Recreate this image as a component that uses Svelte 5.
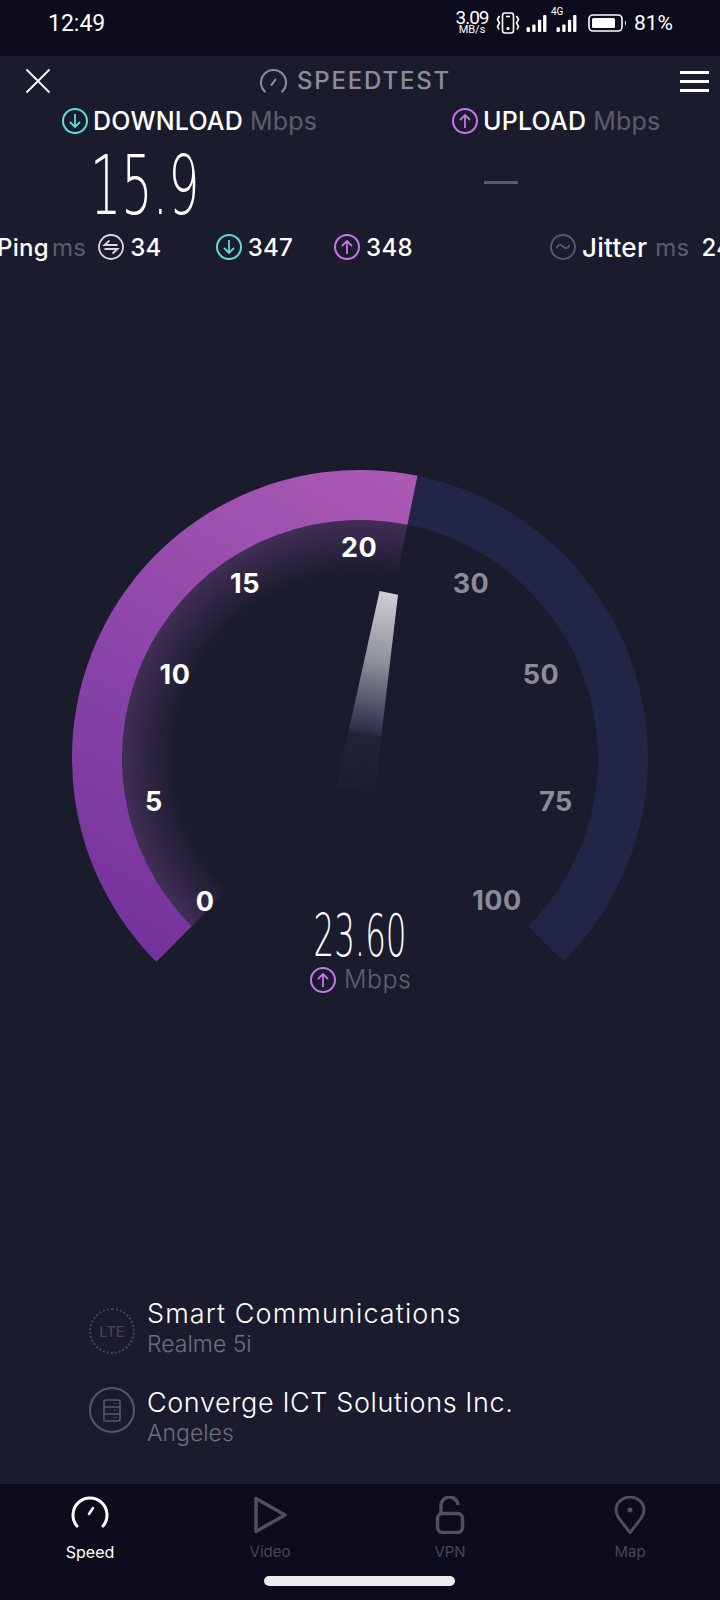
<script lang="ts">
  const cx = 360;
  const cy = 759;

  function polar(r: number, deg: number) {
    const a = ((deg - 90) * Math.PI) / 180;
    return `${(cx + r * Math.cos(a)).toFixed(2)} ${(cy + r * Math.sin(a)).toFixed(2)}`;
  }

  // ring sector, angles in degrees clockwise from 12 o'clock
  function sector(inner: number, outer: number, from: number, to: number) {
    const large = to - from > 180 ? 1 : 0;
    return `M${polar(outer, from)} A${outer} ${outer} 0 ${large} 1 ${polar(outer, to)} L${polar(inner, to)} A${inner} ${inner} 0 ${large} 0 ${polar(inner, from)} Z`;
  }

  const ticks = [
    { label: "0", x: 205, y: 902, on: true },
    { label: "5", x: 154, y: 802, on: true },
    { label: "10", x: 175, y: 675, on: true },
    { label: "15", x: 245, y: 584, on: true },
    { label: "20", x: 359, y: 548, on: true },
    { label: "30", x: 471, y: 584, on: false },
    { label: "50", x: 541, y: 675, on: false },
    { label: "75", x: 556, y: 802, on: false },
    { label: "100", x: 497, y: 901, on: false },
  ];
</script>

{#snippet arrow(up: boolean, color: string)}
  <svg class="ring-icon" viewBox="0 0 26 26" fill="none" stroke={color} stroke-width="2">
    <circle cx="13" cy="13" r="12" />
    {#if up}
      <path d="M13 20V7M8 12l5-5 5 5" stroke-width="1.8" />
    {:else}
      <path d="M13 6v13M8 14l5 5 5-5" stroke-width="1.8" />
    {/if}
  </svg>
{/snippet}

<div class="app">
  <div class="status">
    <span class="clock">12:49</span>
    <div class="status-right">
      <div class="rate"><span>3.09</span><small>MB/s</small></div>
      <svg class="vibrate" viewBox="0 0 24 22" fill="none" stroke="#fff" stroke-width="1.6">
        <rect x="6.500" y="1" width="11" height="20" rx="2.500" />
        <path d="M10 4.500h4" />
        <circle cx="12" cy="16.500" r="0.800" fill="#fff" />
        <path d="M3.500 4L1.500 7.500l2 3.500-2 3.500 1.500 3M20.500 4l2 3.500-2 3.500 2 3.500-1.500 3" />
      </svg>
      <svg class="signal" viewBox="0 0 21 18" fill="#fff">
        <rect x="0" y="13" width="3.500" height="5" rx="1" />
        <rect x="6" y="10" width="3.500" height="8" rx="1" />
        <rect x="12" y="5" width="3.500" height="13" rx="1" />
        <rect x="17.500" y="0" width="3.500" height="18" rx="1" />
      </svg>
      <div class="signal-4g">
        <span>4G</span>
        <svg class="signal" viewBox="0 0 21 18" fill="#fff">
          <rect x="0" y="13" width="3.500" height="5" rx="1" />
          <rect x="6" y="10" width="3.500" height="8" rx="1" />
          <rect x="12" y="5" width="3.500" height="13" rx="1" />
          <rect x="17.500" y="0" width="3.500" height="18" rx="1" />
        </svg>
      </div>
      <svg class="battery" viewBox="0 0 39 18" fill="none">
        <rect x="1" y="1" width="33" height="16" rx="4" stroke="#fff" stroke-width="1.600" />
        <rect x="4" y="4" width="23" height="10" rx="1.500" fill="#fff" />
        <path d="M37 6.500c1.300.6 1.300 4.400 0 5z" fill="#fff" />
      </svg>
      <span class="pct">81%</span>
    </div>
  </div>

  <main class="main">
    <div class="topbar">
      <svg class="close" viewBox="0 0 26 26" stroke="#fff" stroke-width="1.800">
        <path d="M1.500 1.500l23 23M24.500 1.500l-23 23" />
      </svg>
      <div class="brand">
        <svg viewBox="0 0 28 28" fill="none" stroke="#8b8d99" stroke-width="2.200" stroke-linecap="round">
          <path d="M5 24.500A13 13 0 1 1 23 24.500" />
          <path d="M12 17.500l4-5.500" />
        </svg>
        <span>SPEEDTEST</span>
      </div>
      <div class="menu"><i></i><i></i><i></i></div>
    </div>

    <div class="results">
      <div class="result">
        <div class="result-head">
          {@render arrow(false, "#5fdcd8")}
          <b>DOWNLOAD</b><span>Mbps</span>
        </div>
        <div class="value"><span>15.9</span></div>
      </div>
      <div class="result upload">
        <div class="result-head">
          {@render arrow(true, "#c377e8")}
          <b>UPLOAD</b><span>Mbps</span>
        </div>
        <div class="value"><i class="dash"></i></div>
      </div>
    </div>

    <div class="stats">
      <div class="stat ping"><b>Ping</b><span>ms</span></div>
      <div class="stat ping-val">
        <svg class="ring-icon" viewBox="0 0 26 26" fill="none" stroke="#d8d8dc" stroke-width="1.800">
          <circle cx="13" cy="13" r="12" />
          <path d="M19.500 11H6.500l5-4.500M6.500 15h13l-5 4.500" />
        </svg>
        <b>34</b>
      </div>
      <div class="stat dl-val">{@render arrow(false, "#5fdcd8")}<b>347</b></div>
      <div class="stat ul-val">{@render arrow(true, "#c377e8")}<b>348</b></div>
      <div class="stat jitter">
        <svg class="ring-icon" viewBox="0 0 26 26" fill="none" stroke="#5a5c6c" stroke-width="1.800">
          <circle cx="13" cy="13" r="12" />
          <path d="M6.500 14c2-4 4-4 6.500-1.500s4.500 2.500 6.500-1.500" />
        </svg>
        <b>Jitter</b><span>ms</span><b class="jitter-val">24</b>
      </div>
    </div>

    <svg class="gauge" viewBox="0 440 720 570">
      <defs>
        <linearGradient id="fill" gradientUnits="userSpaceOnUse" x1="156" y1="961" x2="418" y2="476">
          <stop offset="0" stop-color="#74339b" />
          <stop offset="0.45" stop-color="#8a44a9" />
          <stop offset="1" stop-color="#ac5ab4" />
        </linearGradient>
        <radialGradient id="glow" gradientUnits="userSpaceOnUse" cx={cx} cy={cy} r="238">
          <stop offset="0.78" stop-color="#a85abe" stop-opacity="0" />
          <stop offset="1" stop-color="#a85abe" stop-opacity="0.28" />
        </radialGradient>
        <linearGradient id="needle" gradientUnits="userSpaceOnUse" x1="389" y1="594" x2="355" y2="791">
          <stop offset="0" stop-color="#cfcfd3" />
          <stop offset="0.35" stop-color="#8d8f9a" />
          <stop offset="0.7" stop-color="#2c2e4c" />
          <stop offset="0.72" stop-color="#222438" />
          <stop offset="1" stop-color="#1f2134" stop-opacity="0.4" />
        </linearGradient>
      </defs>
      <path d={sector(238, 288, 11.5, 135)} fill="#222545" />
      <path d={sector(238, 288, -135, 11.5)} fill="url(#fill)" />
      <path d={sector(186, 238, -135, 11.5)} fill="url(#glow)" />
      <polygon points="379.600,592 398,595.700 374.600,794 336,789" fill="url(#needle)" />
      {#each ticks as t (t.label)}
        <text class="tick" class:on={t.on} x={t.x} y={t.y + 9.500} text-anchor="middle">{t.label}</text>
      {/each}
      <text class="speed" transform="translate(360 956.500) scale(0.56 1)" text-anchor="middle">23.60</text>
      <g fill="none" stroke="#c377e8" stroke-width="2" transform="translate(310 968)">
        <circle cx="13" cy="13" r="12" />
        <path d="M13 20V7M8 12l5-5 5 5" stroke-width="1.800" />
      </g>
      <text class="unit" x="344" y="989">Mbps</text>
    </svg>

    <div class="info">
      <div class="info-row first">
        <div class="badge dim"><span>LTE</span></div>
        <div class="info-text"><b>Smart Communications</b><span>Realme 5i</span></div>
      </div>
      <div class="info-row second">
        <div class="badge">
          <svg viewBox="0 0 18 23" fill="none" stroke="#55566a" stroke-width="1.600">
            <rect x="1" y="1" width="16" height="21" rx="2" />
            <path d="M1 8h16M1 15h16" />
            <path d="M11 4.500h3.500M11 11.500h3.500M11 18.500h3.500" stroke-width="1.200" stroke-dasharray="1 1" />
          </svg>
        </div>
        <div class="info-text"><b>Converge ICT Solutions Inc.</b><span>Angeles</span></div>
      </div>
    </div>
  </main>

  <nav class="tabbar">
    <div class="tabs">
      <div class="tab active">
        <svg viewBox="0 0 38 34" fill="none" stroke="#fff" stroke-width="3" stroke-linecap="round">
          <path d="M6 32A17 17 0 1 1 32 32" />
          <path d="M18 20l4-6" stroke-width="2.500" />
        </svg>
        <span>Speed</span>
      </div>
      <div class="tab">
        <svg viewBox="0 0 38 38" fill="none" stroke="#4e505e" stroke-width="3.500" stroke-linejoin="round">
          <path d="M5 2.500L34 19 5 35.500z" />
        </svg>
        <span>Video</span>
      </div>
      <div class="tab">
        <svg viewBox="0 0 38 38" fill="none" stroke="#4e505e" stroke-width="3.500">
          <rect x="6.500" y="17.500" width="25" height="19" rx="5" />
          <path d="M10 17V10a8.500 8.500 0 0 1 17-1" />
        </svg>
        <span>VPN</span>
      </div>
      <div class="tab">
        <svg viewBox="0 0 38 38" fill="none" stroke="#4e505e" stroke-width="3">
          <path d="M19 36.500C10 25 5 20 5 14a14 13 0 0 1 28 0c0 6-5 11-14 22.500z" />
          <circle cx="19" cy="14" r="2.500" fill="#4e505e" stroke="none" />
        </svg>
        <span>Map</span>
      </div>
    </div>
    <div class="home"></div>
  </nav>
</div>

<style>
  :global(body) {
    margin: 0;
    background: #1a1c2e;
  }

  .app {
    width: 720px;
    height: 1600px;
    overflow: hidden;
    display: flex;
    flex-direction: column;
    background: #1a1c2e;
    color: #fff;
    font-family: Inter, "Liberation Sans", sans-serif;
  }

  .status {
    height: 56px;
    flex: none;
    background: #0c0c1c;
    display: flex;
    align-items: center;
    justify-content: space-between;
    padding: 0 47px 10px 48px;
    box-sizing: border-box;
    font-family: Roboto, sans-serif;
  }

  .clock {
    font-size: 23px;
  }

  .status-right {
    display: flex;
    align-items: center;
  }

  .rate {
    display: flex;
    flex-direction: column;
    align-items: center;
    width: 34px;
    font-size: 19px;
    letter-spacing: -1px;
  }

  .rate span {
    line-height: 14px;
  }

  .rate small {
    font-size: 11px;
    line-height: 10px;
    letter-spacing: 0;
  }

  .vibrate {
    width: 24px;
    height: 22px;
    margin-left: 7px;
  }

  .signal {
    width: 21px;
    height: 17px;
    margin-left: 6px;
  }

  .signal-4g {
    position: relative;
    margin-left: 3px;
    display: flex;
  }

  .signal-4g span {
    position: absolute;
    left: 1px;
    top: -8px;
    font-size: 10px;
    line-height: 10px;
  }

  .battery {
    width: 39px;
    height: 18px;
    margin-left: 11px;
  }

  .pct {
    font-size: 21px;
    margin-left: 7px;
  }

  .main {
    flex: 1;
    min-height: 0;
    display: flex;
    flex-direction: column;
  }

  .topbar {
    height: 50px;
    flex: none;
    display: flex;
    align-items: center;
    justify-content: space-between;
    padding: 0 11px 0 25px;
    position: relative;
  }

  .close {
    width: 26px;
    height: 26px;
  }

  .brand {
    position: absolute;
    left: 260px;
    top: 11px;
    display: flex;
    align-items: center;
    gap: 10px;
    color: #8b8d99;
    font-size: 24px;
    font-weight: 500;
    letter-spacing: 1.8px;
    line-height: 28px;
  }

  .brand svg {
    width: 27px;
    height: 27px;
  }

  .menu {
    display: flex;
    flex-direction: column;
    gap: 6px;
    width: 29px;
  }

  .menu i {
    height: 3px;
    background: #fff;
  }

  .results {
    display: flex;
    flex: none;
    padding: 1px 0 0 62px;
  }

  .result {
    width: 390px;
    flex: none;
  }

  .result.upload {
    width: 268px;
  }

  .result-head {
    display: flex;
    align-items: center;
    height: 28px;
    font-size: 25px;
    gap: 5px;
    letter-spacing: 0.2px;
  }

  .result-head b {
    font-weight: 500;
  }

  .result-head span,
  .stat span {
    color: #5a5c6c;
    font-weight: 400;
    margin-left: 2px;
  }

  .ring-icon {
    width: 26px;
    height: 26px;
    flex: none;
  }

  .value {
    height: 86px;
    padding-top: 8px;
    display: flex;
    align-items: center;
  }

  .value span {
    margin-left: 28px;
    font-family: "DejaVu Sans", sans-serif;
    font-weight: 200;
    font-size: 82px;
    line-height: 82px;
    transform: scaleX(0.6);
    transform-origin: left center;
  }

  .dash {
    display: block;
    width: 34px;
    height: 3px;
    margin: -8px 0 0 32px;
    background: #5a5c6c;
  }

  .stats {
    position: relative;
    display: flex;
    align-items: center;
    height: 28px;
    flex: none;
    margin-top: 4px;
    font-size: 24px;
    letter-spacing: 0.3px;
    overflow: hidden;
  }

  .stats b {
    font-weight: 500;
  }

  .stat {
    display: flex;
    align-items: center;
    flex: none;
    gap: 6px;
  }

  .ping {
    margin-left: -3px;
    gap: 1px;
  }

  .ping-val {
    margin-left: 12px;
  }

  .dl-val {
    margin-left: 54px;
  }

  .ul-val {
    margin-left: 41px;
  }

  .jitter {
    margin-left: 137px;
    font-size: 26px;
  }

  .jitter span {
    font-size: 24px;
  }

  .jitter-val {
    margin-left: 6px;
    font-size: 24px;
  }

  .gauge {
    display: block;
    width: 720px;
    height: 570px;
    flex: none;
    margin-top: 178px;
  }

  .tick {
    font-size: 27px;
    font-weight: 700;
    fill: #fff;
    letter-spacing: 0.5px;
  }

  .tick:not(.on) {
    fill: #8a8c98;
  }

  .speed {
    font-family: "DejaVu Sans", sans-serif;
    font-weight: 200;
    font-size: 58px;
    fill: #fff;
  }

  .unit {
    font-size: 25px;
    font-weight: 300;
    fill: #5e6070;
    letter-spacing: 0.5px;
  }

  .info {
    margin-top: auto;
    padding: 0 0 35px 89px;
    display: flex;
    flex-direction: column;
    gap: 27px;
  }

  .info-row {
    display: flex;
    align-items: center;
    gap: 12px;
  }

  .first .badge {
    margin-top: 4px;
  }

  .second .badge {
    margin-bottom: 16px;
  }

  .badge {
    width: 46px;
    height: 46px;
    box-sizing: border-box;
    border-radius: 50%;
    border: 2px solid #55566a;
    display: flex;
    align-items: center;
    justify-content: center;
    flex: none;
  }

  .badge.dim {
    border: 2px dotted #48445e;
  }

  .badge span {
    font-size: 15px;
    font-weight: 400;
    color: #48445e;
  }

  .badge svg {
    width: 18px;
    height: 23px;
  }

  .info-text {
    display: flex;
    flex-direction: column;
    line-height: 31px;
  }

  .info-text b {
    font-size: 27px;
    font-weight: 300;
    letter-spacing: 0.6px;
  }

  .first .info-text b {
    letter-spacing: 1.1px;
  }

  .info-text span {
    font-size: 23px;
    font-weight: 300;
    color: #6c6e7c;
  }

  .tabbar {
    height: 116px;
    flex: none;
    background: #0c0c1c;
    position: relative;
  }

  .tabs {
    display: flex;
  }

  .tab {
    width: 180px;
    height: 84px;
    display: flex;
    flex-direction: column;
    align-items: center;
    padding-top: 12px;
    box-sizing: border-box;
    font-size: 15px;
    color: #45475a;
  }

  .tab svg {
    width: 38px;
    height: 38px;
  }

  .tab span {
    margin-top: 8px;
    line-height: 20px;
  }

  .tab.active {
    color: #fff;
    font-size: 16px;
  }

  .tab.active svg {
    margin: -4px 0 4px;
  }

  .home {
    position: absolute;
    left: 264px;
    top: 92px;
    width: 191px;
    height: 10px;
    border-radius: 5px;
    background: #ececf0;
  }
</style>
